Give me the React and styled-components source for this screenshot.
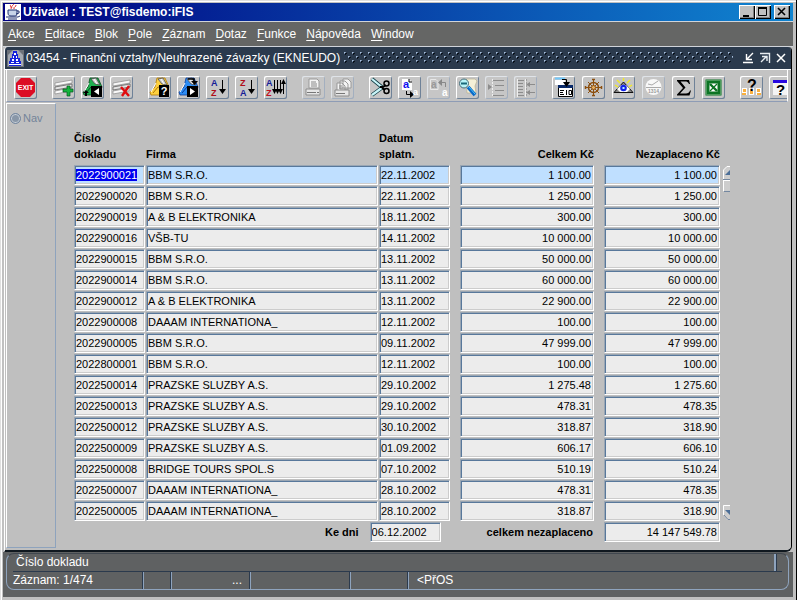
import { useEffect, useRef } from 'react';
import styled, { createGlobalStyle } from 'styled-components';

const GlobalStyle = createGlobalStyle`
    * { box-sizing: border-box; }
    body {
        margin: 0;
        background: #c0c0c0;
        color: #000;
        font-family: "Liberation Sans", Arial, sans-serif;
        font-size: 11px;
    }
    button, input {
        font: inherit;
        color: inherit;
    }
`;

const Window = styled.div`
    display: flex;
    flex-direction: column;
    min-height: 100vh;
    padding: 3px 3px 3px 3px;
    border-right: 1px solid #000;
    border-bottom: 1px solid #000;
    background: #c0c0c0;
    box-shadow: inset 1px 1px 0 #dfdfdf, inset 2px 2px 0 #fff;
`;

const TitleBar = styled.header`
    display: flex;
    align-items: center;
    gap: 2px;
    height: 18px;
    padding: 0 3px 0 2px;
    background: linear-gradient(90deg, #000080, #0842a8 50%, #1084d0);
    color: #fff;
    font-weight: bold;
`;

const TitleText = styled.h1`
    flex: 1;
    margin: 0;
    font-size: 12px;
    line-height: 18px;
`;

const WinButton = styled.button`
    display: flex;
    width: 16px;
    height: 14px;
    padding: 0;
    margin-left: ${props => props.$apart ? '1px' : '-2px'};
    border: 0;
    background: #c0c0c0;
    box-shadow: inset 1px 1px 0 #fff, inset -1px -1px 0 #000, inset -2px -2px 0 #808080;
`;

const MenuBar = styled.nav`
    display: flex;
    gap: 10px;
    height: 26px;
    padding: 0 5px;
    border-top: 1px solid #d0d4da;
    border-bottom: 1px solid #d0d4da;
    background: #656665;
`;

const MenuItem = styled.button`
    padding: 0;
    border: 0;
    background: none;
    color: #fff;
    font-size: 12px;
    line-height: 24px;
    u {
        text-underline-offset: 2px;
    }
`;

const Frame = styled.main`
    display: flex;
    flex: 1;
    flex-direction: column;
    margin: 0 1px 0 1px;
    border-left: 1px solid #fff;
    border-right: 1px solid #000;
    border-bottom: 2px solid #10181f;
    border-radius: 4px 4px 6px 0;
    overflow: hidden;
`;

const FrameTitle = styled.div`
    display: flex;
    align-items: center;
    height: 23px;
    padding: 0 4px 0 2px;
    border-bottom: 1px solid #fff;
    background: #2b3a4d;
    color: #fff;
`;

const FrameName = styled.h2`
    margin: 0 4px 0 2px;
    font-size: 12px;
    font-weight: normal;
    white-space: nowrap;
`;

const BumpsSvg = styled.svg`
    flex: 1;
    min-width: 0;
    height: 12px;
    margin-right: 6px;
`;

const FrameButton = styled.button`
    display: flex;
    width: 12px;
    height: 12px;
    padding: 0;
    margin-left: 4px;
    border: 0;
    background: none;
`;

const ToolBar = styled.div`
    display: flex;
    gap: 15px;
    height: 32px;
    margin: 0 3px 0 1px;
    padding: 6px 0 0 7px;
    border-left: 1px solid #fff;
    border-right: 1px solid #fff;
    border-bottom: 1px solid #8e9cb5;
    background: #c3c3c3;
    overflow: hidden;
`;

const ToolGroup = styled.div`
    display: flex;
    flex: none;
    gap: ${props => props.$wide ? '7px' : '6px'};
`;

const ToolButton = styled.button`
    display: flex;
    flex: none;
    width: 23px;
    height: 23px;
    padding: 0;
    border: 0;
    border-radius: 2px;
    background: #c6c6c6;
    box-shadow: inset 1px 1px 0 #fff, inset -1px -1px 0 #6f8298;
    &:disabled {
        box-shadow: inset 1px 1px 0 #dfe3e8, inset -1px -1px 0 #a3afbf;
    }
`;

const Body = styled.div`
    display: flex;
    flex: 1;
    background: #bfbfbf;
`;

const SidePanel = styled.aside`
    width: 50px;
    margin: 1px 0 2px 1px;
    padding: 7px 3px;
    border: 1px solid #8ea3bd;
    border-top-color: #fff;
    border-left-color: #fff;
`;

const NavLabel = styled.label`
    display: flex;
    align-items: center;
    gap: 2px;
    color: #73849a;
    line-height: 14px;
`;

const NavRadio = styled.input`
    appearance: none;
    flex: none;
    width: 11px;
    height: 11px;
    margin: 0;
    border: 1px solid #7387a0;
    border-radius: 50%;
    background: #8997a8;
    box-shadow: inset 0 0 0 1px #c9d0d8;
`;

const Form = styled.form`
    flex: 1;
    min-width: 0;
    padding: 28px 61px 8px 18px;
`;

const Records = styled.div`
    display: flex;
    gap: 2px;
`;

const Table = styled.table`
    flex: 1;
    width: 100%;
    border-collapse: collapse;
    table-layout: fixed;
`;

const Col = styled.col`
    width: ${props => props.$width};
`;

const Th = styled.th`
    height: 35px;
    padding: 0 ${props => props.$gap || 1}px 3px 0;
    text-align: ${props => props.$right ? 'right' : 'left'};
    vertical-align: bottom;
    line-height: 16px;
`;

const Td = styled.td`
    height: 21px;
    padding: 0 ${props => props.$gap || 1}px 1px 0;
`;

const Field = styled.input`
    display: block;
    width: ${props => props.$width || '100%'};
    height: 20px;
    padding: 0 2px 0 1px;
    border: 1px solid #9aa6b3;
    border-right-color: #fff;
    border-bottom-color: #fff;
    border-radius: 0;
    outline: 0;
    background: ${props => props.$current ? '#bfdfff' : '#ececec'};
    box-shadow: inset 1px 1px 0 #58789b, inset -1px -1px 0 #ccc;
    text-align: ${props => props.$right ? 'right' : 'left'};
    text-overflow: clip;
    &::selection {
        background: #0000f0;
        color: #fff;
    }
`;

const Rail = styled.div`
    display: flex;
    flex-direction: column;
    justify-content: space-between;
    width: 7px;
    padding: 36px 0 2px;
`;

const RailButton = styled.button`
    display: flex;
    width: 7px;
    height: ${props => props.$tall ? '26px' : '15px'};
    padding: 0;
    border: 0;
    background: none;
`;

const Totals = styled.div`
    display: flex;
    align-items: center;
    justify-content: flex-end;
    gap: 11px;
    padding-right: 10px;
`;

const TotalLabel = styled.label`
    font-weight: bold;
    &:not(:first-child) {
        padding-left: 35px;
    }
`;

const StatusBar = styled.footer`
    padding: 1px 4px 7px 3px;
    background: #5f6162;
    color: #fff;
    font-size: 12px;
`;

const StatusBox = styled.div`
    padding: 0 6px;
    border: 1px solid #8ea3bd;
    border-top-color: #40474f;
    border-radius: 8px;
`;

const StatusLine = styled.div`
    display: grid;
    grid-template-columns: ${props => props.$columns};
    line-height: 17px;
`;

const StatusHint = styled(StatusLine)`
    border-bottom: 1px solid #2b3a4d;
`;

const StatusCell = styled.span`
    height: 17px;
    padding: 0 8px;
    border-right: 1px solid #8ea3bd;
    box-shadow: inset -1px 0 0 #2b3a4d;
    text-align: ${props => props.$right ? 'right' : 'left'};
    &:first-child {
        padding-left: ${props => props.$inset ? '3px' : '0'};
    }
    &:last-child {
        border-right: ${props => props.$inset ? '1px solid #2b3a4d' : '0'};
        box-shadow: ${props => props.$inset ? 'inset -2px 0 0 #8ea3bd' : 'none'};
    }
`;

const Glyph = ({ size = 23, height, children }) => (
    <svg width={size} height={height || size} viewBox={`0 0 ${size} ${height || size}`} fill="none" aria-hidden="true">
        {children}
    </svg>
);

const letter = { fontFamily: '"Liberation Sans", Arial, sans-serif', fontWeight: 'bold' };

const JavaIcon = () => (
    <Glyph size={16}>
        <path d="M0 0h16v16H0z" fill="#fff" />
        <path d="M8 0c2 1-3 2-1 4M11 1c1 1-3 2-2 4M6 1c-2 1 1 2 0 4" stroke="#e02020" />
        <path d="M3 6h9v4c0 2-2 2-3 2H6c-2 0-3-1-3-3z" fill="#c8d4e8" stroke="#203070" />
        <path d="M12 7h2v2l-3 1M1 13h12l2-1M3 15h9" stroke="#203070" />
    </Glyph>
);

const FormIcon = () => (
    <Glyph size={17}>
        <path d="M0 0h17v17H0z" fill="#6c7178" />
        <path d="M1 16V5l5-5h5l5 5v11z" fill="#a4a9b0" />
        <path d="M6 1h4v3h1v4h2v3h1v5H2v-5h1V8h2V4h1z" fill="#1522dc" />
        <path d="M7 3h2v2H7zM6 6h1v2H6zM9 6h1v2H9zM5 9h2v2H5zM9 9h2v2H9zM4 12h3v1H4zM9 12h3v1H9zM2 14h12v1H2z" fill="#fff" />
    </Glyph>
);

const Bumps = () => (
    <BumpsSvg aria-hidden="true" shapeRendering="crispEdges">
        <defs>
            <pattern id="bumps" width="8" height="8" patternUnits="userSpaceOnUse">
                <path d="M0 0h1v1H0zM4 4h1v1H4z" fill="#a9bdd8" />
                <path d="M1 0h1v1H1zM0 1h1v1H0zM5 4h1v1H5zM4 5h1v1H4z" fill="#7c93b0" />
                <path d="M1 1h2v1H1zM1 2h1v1H1zM5 5h2v1H5zM5 6h1v1H5z" fill="#0a111b" />
            </pattern>
        </defs>
        <rect width="100%" height="12" fill="url(#bumps)" />
    </BumpsSvg>
);

const Sheet = () => (
    <>
        <path d="M3 7l17-3v3L3 10z" fill="#f8f8f8" stroke="#8a8a8a" strokeWidth="0.7" />
        <path d="M3 11l17-3v3L3 14z" fill="#e4e4e4" stroke="#555" strokeWidth="0.7" />
        <path d="M3 15l16-3v3L3 18z" fill="#fafafa" stroke="#888" strokeWidth="0.7" />
    </>
);

const Folder = ({ color, dark }) => (
    <>
        <path d="M9 2h8l4 9-4 8H3l-1-3 5-5z" fill={color} stroke={dark} strokeWidth="0.8" />
        <path d="M10 3l5-1 4 7-5-1z" fill="#cfcfcf" stroke="#444" strokeWidth="0.7" />
        <path d="M13 3l3 5M8 7l-5 9" stroke="#fff" />
        <path d="M5 17l5-6 7 1" stroke={dark} />
    </>
);

const Exit = () => (
    <Glyph>
        <path d="M7 2h9l5 5v9l-5 5H7l-5-5V7z" fill="#dc0c24" />
        <text x="11.500" y="14" fill="#fff" textAnchor="middle" fontSize="7" {...letter}>EXIT</text>
    </Glyph>
);

const Insert = () => (
    <Glyph>
        <Sheet />
        <path d="M15 10h3v3h3v3h-3v4h-3v-4h-4v-3h4z" fill="#14b43c" stroke="#04581c" strokeWidth="0.7" />
    </Glyph>
);

const Duplicate = () => (
    <Glyph>
        <Folder color="#1fb050" dark="#064c1c" />
        <path d="M10 10h11v11H10z" fill="#000" />
        <path d="M18 12v7l-5-3.500z" fill="#fff" />
        <path d="M2 17l3-3 3 3H6v3H4v-3z" fill="#000" />
    </Glyph>
);

const Remove = () => (
    <Glyph>
        <Sheet />
        <path d="M11 11l8 9M19 10l-7 10" stroke="#e00c10" strokeWidth="2.400" />
    </Glyph>
);

const EnterQuery = () => (
    <Glyph>
        <Folder color="#fcd040" dark="#b07808" />
        <path d="M11 9h10v12H11z" fill="#000" />
        <text x="16" y="19" fill="#fff" textAnchor="middle" fontSize="11" {...letter}>?</text>
    </Glyph>
);

const RunQuery = () => (
    <Glyph>
        <Folder color="#2c8cf4" dark="#0c3c98" />
        <path d="M10 10h11v11H10z" fill="#000" />
        <path d="M13 12v7l5-3.500z" fill="#fff" />
        <path d="M11 3h6v3" stroke="#000" strokeWidth="1.500" />
        <path d="M14 5h7l-3.500 4z" fill="#000" />
    </Glyph>
);

const Sort = ({ top, bottom, topColor, bottomColor }) => (
    <Glyph>
        <text x="5" y="10" fill={topColor} fontSize="9" {...letter}>{top}</text>
        <text x="5" y="20" fill={bottomColor} fontSize="9" {...letter}>{bottom}</text>
        <path d="M16.500 4v13" stroke="#000" />
        <path d="M13 13h7l-3.500 5z" fill="#000" />
    </Glyph>
);

const SortMany = () => (
    <Glyph>
        <text x="2" y="10" fill="#141c98" fontSize="9" {...letter}>A</text>
        <text x="2" y="20" fill="#c01020" fontSize="9" {...letter}>Z</text>
        <path d="M10.500 4v12M13.500 4v12M16.500 4v12M19.500 6v12" stroke="#000" />
        <path d="M8 13h5l-2.500 5zM11 13h5l-2.500 5zM14 13h5l-2.500 5zM17 8h5l-2.500-5z" fill="#000" />
    </Glyph>
);

const Print = () => (
    <Glyph>
        <path d="M7 3h8l2 2v7H7z" fill="#f4f4f4" stroke="#999" />
        <path d="M9 6h5M9 8h6M9 10h6" stroke="#888" />
        <path d="M4 13h14v6H4z" fill="#e6e6e6" stroke="#8c8c8c" />
        <path d="M5 16.500h9M15 16.500h2" stroke="#777" />
    </Glyph>
);

const PrintMany = () => (
    <Glyph>
        <path d="M12 3h5l3 3v6h-8zM9 5h5l3 3v5H9zM6 7h5l3 3v5H6z" fill="#f4f4f4" stroke="#999" />
        <path d="M8 10h3M8 12h4" stroke="#888" />
        <path d="M4 14h14v6H4z" fill="#e6e6e6" stroke="#8c8c8c" />
        <path d="M5 17.500h9" stroke="#777" />
    </Glyph>
);

const Cut = () => (
    <Glyph>
        <path d="M3 3l11 9M3 19l11-8" stroke="#103c44" strokeWidth="3.600" />
        <path d="M3 3l11 9M3 19l11-8" stroke="#c8f4f8" strokeWidth="2.200" />
        <circle cx="17.500" cy="7.500" r="2.500" stroke="#000" strokeWidth="1.500" />
        <circle cx="17.500" cy="15" r="2.500" stroke="#000" strokeWidth="1.500" />
        <path d="M11 11h3l3-2M13 12l3 2" stroke="#000" strokeWidth="2" />
    </Glyph>
);

const Copy = () => (
    <Glyph>
        <path d="M4 3h7l3 3v8H4z" fill="#fff" />
        <path d="M11 3v3h3" stroke="#000" />
        <text x="5" y="12" fill="#1010f0" fontSize="11" {...letter}>a</text>
        <path d="M8.500 15v3.500H13" stroke="#000" />
        <path d="M12 15v7l4-3.500z" fill="#000" />
        <text x="15" y="19" fill="#fff" fontSize="9" {...letter}>a</text>
    </Glyph>
);

const Paste = () => (
    <Glyph>
        <path d="M3.500 3.500H9l2 2v8H3.500z" stroke="#e8e8e8" />
        <text x="4" y="12" fill="#999" fontSize="10" {...letter}>a</text>
        <path d="M13 6.500h5.500V11" stroke="#888" />
        <path d="M15 3v7l-4-3.500z" fill="#888" />
        <text x="15" y="20" fill="#fff" fontSize="10" {...letter}>a</text>
    </Glyph>
);

const Find = () => (
    <Glyph>
        <path d="M10 3h9l2 2-2 5 1 7h-9z" fill="#f4f0d8" stroke="#b8b090" strokeWidth="0.700" />
        <path d="M12 11l7 8" stroke="#0868c8" strokeWidth="3.500" />
        <path d="M13 11l6 7" stroke="#50c8fc" />
        <circle cx="8" cy="7.500" r="4.500" fill="#b8f4f8" stroke="#486c78" />
        <path d="M5 7.500h6" stroke="#186878" strokeWidth="2" />
    </Glyph>
);

const Indent = () => (
    <Glyph>
        <path d="M8 4.500h11M10 9.500h9M10 14.500h9M8 19.500h11" stroke="#8c8c8c" />
        <path d="M7.500 3v17" stroke="#eee" strokeDasharray="2 1" />
        <path d="M3 8v6l4-3z" fill="#8c8c8c" />
    </Glyph>
);

const IndentTwin = () => (
    <Glyph>
        <path d="M4 4.500h6M4 7.500h5M4 10.500h5M4 13.500h5M4 16.500h5M4 19.500h6M14 8.500h7M14 16.500h7" stroke="#8c8c8c" />
        <path d="M3.500 3v18M11.500 3v18" stroke="#eee" />
        <path d="M12.500 3v18" stroke="#a0a0a0" strokeDasharray="2 1" />
        <path d="M16 6v5l-4-2.500zM16 14v5l-4-2.500z" fill="#8c8c8c" />
    </Glyph>
);

const ListValues = () => (
    <Glyph>
        <path d="M3 4h10v5H3z" fill="#fff" />
        <path d="M3 2.500h10" stroke="#70c8fc" strokeWidth="2" />
        <path d="M6.500 9.500h14v11h-14z" fill="#fff" stroke="#000" />
        <path d="M6 9h15v3H6z" fill="#082868" />
        <path d="M8 14.500h4M8 16.500h3M8 18.500h4M14.500 14v5M17 14.500h2.500v4H17z" stroke="#000" />
        <path d="M10 3.500h4.500V7" stroke="#000" />
        <path d="M11 6h7l-3.500 5z" fill="#000" />
    </Glyph>
);

const Wheel = () => (
    <Glyph>
        <circle cx="11.500" cy="11.500" r="5" stroke="#8c5010" strokeWidth="1.500" />
        <path d="M3 11.500h17M11.500 3v17M6 6l11 11M17 6L6 17" stroke="#8c5010" />
        <path d="M3.500 10v3M19.500 10v3M10 3.500h3M10 19.500h3" stroke="#8c5010" strokeWidth="1.500" />
        <circle cx="11.500" cy="11.500" r="2" fill="#e8b060" stroke="#8c5010" />
    </Glyph>
);

const Eye = () => (
    <Glyph>
        <path d="M3 9l3 2M5 4l3 3M11.500 2v3M18 4l-3 3M20 9l-3 2" stroke="#f4ec20" strokeWidth="1.400" />
        <path d="M11.500 6L21 16.500H2z" fill="#8a8a8a" stroke="#101010" />
        <path d="M5 13l4-4h5l4 4-3 3H8z" fill="#fff" />
        <circle cx="11.500" cy="12" r="3.300" fill="#1424e8" />
        <path d="M10.500 11h2v2h-2z" fill="#b0f0ff" />
    </Glyph>
);

const Clock = () => (
    <Glyph>
        <circle cx="11.500" cy="11" r="8" fill="#f8f8f8" />
        <path d="M10 9l6-4M10 9L6 8M4 11.500h15" stroke="#aaa" />
        <text x="11.500" y="17" fill="#999" textAnchor="middle" fontSize="5" {...letter}>1314</text>
    </Glyph>
);

const Sigma = () => (
    <Glyph>
        <path d="M5 4h12l1 4h-1c-1-2-2-2.500-4-2.500H8.500l5 6-5.500 6h6c2 0 3.500-1 4-3h1l-1.500 5H5v-1l6-6.500L5 5z" fill="#000" />
    </Glyph>
);

const Excel = () => (
    <Glyph>
        <path d="M5.500 5.500h12v12h-12z" fill="#fff" stroke="#0c7424" strokeWidth="4" />
        <path d="M4.500 4.500h14v14h-14z" stroke="#8cc094" strokeDasharray="1 1" />
        <path d="M8 8l7 7" stroke="#0c7424" strokeWidth="2.400" />
        <path d="M15 8l-7 7" stroke="#0c7424" strokeWidth="1.200" />
    </Glyph>
);

const HelpItems = () => (
    <Glyph>
        <path d="M2 12h5v7H2zM9 12h5v7H9zM16 12h5v7h-5z" fill="#fff" />
        <path d="M3 13h3v3H3zM10 15h3v3h-3zM17 13h3v3h-3zM2 17h4v2H2zM17 17h4v2h-4z" fill="#f8b040" />
        <text x="12" y="15" fill="#000" textAnchor="middle" fontSize="16" {...letter}>?</text>
    </Glyph>
);

const HelpWindow = () => (
    <Glyph>
        <path d="M4 4h17v15H4z" fill="#f4f4f4" />
        <path d="M4 4h17v3H4z" fill="#2808e0" />
        <text x="11.500" y="19" fill="#000" textAnchor="middle" fontSize="15" {...letter}>?</text>
    </Glyph>
);

const menu = ['Akce', 'Editace', 'Blok', 'Pole', 'Záznam', 'Dotaz', 'Funkce', 'Nápověda', 'Window'];

const tools = [
    [['Konec', <Exit />]],
    [['Vložit záznam', <Insert />], ['Duplikovat', <Duplicate />], ['Zrušit záznam', <Remove />]],
    [
        ['Zadat dotaz', <EnterQuery />],
        ['Provést dotaz', <RunQuery />],
        ['Třídit vzestupně', <Sort top="A" bottom="Z" topColor="#141c98" bottomColor="#b00c18" />],
        ['Třídit sestupně', <Sort top="Z" bottom="A" topColor="#b00c18" bottomColor="#141c98" />],
        ['Třídění', <SortMany />],
    ],
    [['Tisk', <Print />, true], ['Tisk sestav', <PrintMany />, true]],
    [
        ['Vyjmout', <Cut />],
        ['Kopírovat', <Copy />],
        ['Vložit', <Paste />, true],
        ['Najít', <Find />],
        ['Blok', <Indent />, true],
        ['Bloky', <IndentTwin />, true],
    ],
    [
        ['Seznam hodnot', <ListValues />],
        ['Navigace', <Wheel />],
        ['Náhled', <Eye />],
        ['Čas', <Clock />, true],
        ['Součet', <Sigma />],
        ['Excel', <Excel />],
    ],
    [['Nápověda k položce', <HelpItems />], ['Nápověda k oknu', <HelpWindow />]],
];

const columns = [
    { name: 'Číslo dokladu', head: <>Číslo<br />dokladu</>, width: '72px' },
    { name: 'Firma', head: 'Firma', width: 'auto' },
    { name: 'Datum splatn.', head: <>Datum<br />splatn.</>, width: '81px', gap: 10 },
    { name: 'Celkem Kč', head: 'Celkem Kč', width: '144px', gap: 10, right: true },
    { name: 'Nezaplaceno Kč', head: 'Nezaplaceno Kč', width: '117px', right: true },
];

const rows = [
    ['2022900021', 'BBM S.R.O.', '22.11.2002', '1 100.00', '1 100.00'],
    ['2022900020', 'BBM S.R.O.', '22.11.2002', '1 250.00', '1 250.00'],
    ['2022900019', 'A & B ELEKTRONIKA', '18.11.2002', '300.00', '300.00'],
    ['2022900016', 'VŠB-TU', '14.11.2002', '10 000.00', '10 000.00'],
    ['2022900015', 'BBM S.R.O.', '13.11.2002', '50 000.00', '50 000.00'],
    ['2022900014', 'BBM S.R.O.', '13.11.2002', '60 000.00', '60 000.00'],
    ['2022900012', 'A & B ELEKTRONIKA', '13.11.2002', '22 900.00', '22 900.00'],
    ['2022900008', 'DAAAM INTERNATIONA_', '12.11.2002', '100.00', '100.00'],
    ['2022900005', 'BBM S.R.O.', '09.11.2002', '47 999.00', '47 999.00'],
    ['2022800001', 'BBM S.R.O.', '12.11.2002', '100.00', '100.00'],
    ['2022500014', 'PRAZSKE SLUZBY A.S.', '29.10.2002', '1 275.48', '1 275.60'],
    ['2022500013', 'PRAZSKE SLUZBY A.S.', '29.10.2002', '478.31', '478.35'],
    ['2022500012', 'PRAZSKE SLUZBY A.S.', '30.10.2002', '318.87', '318.90'],
    ['2022500009', 'PRAZSKE SLUZBY A.S.', '01.09.2002', '606.17', '606.10'],
    ['2022500008', 'BRIDGE TOURS SPOL.S', '07.10.2002', '510.19', '510.24'],
    ['2022500007', 'DAAAM INTERNATIONA_', '28.10.2002', '478.31', '478.35'],
    ['2022500005', 'DAAAM INTERNATIONA_', '28.10.2002', '318.87', '318.90'],
];

export default function App() {
    const first = useRef(null);

    useEffect(() => {
        first.current.focus();
        first.current.select();
    }, []);

    return (
        <Window>
            <GlobalStyle />
            <TitleBar>
                <JavaIcon />
                <TitleText>Uživatel : TEST@fisdemo:iFIS</TitleText>
                <WinButton aria-label="Minimalizovat">
                    <Glyph size={16} height={14}><path d="M4 10h6v2H4z" fill="#000" /></Glyph>
                </WinButton>
                <WinButton aria-label="Maximalizovat">
                    <Glyph size={16} height={14}><path d="M3.500 3.500h8v7h-8zM3 3.500h9" stroke="#000" /><path d="M3 2h9v2H3z" fill="#000" /></Glyph>
                </WinButton>
                <WinButton $apart aria-label="Zavřít">
                    <Glyph size={16} height={14}><path d="M4 3l7 7M11 3l-7 7" stroke="#000" strokeWidth="1.600" /></Glyph>
                </WinButton>
            </TitleBar>
            <MenuBar>
                {menu.map(item => <MenuItem key={item}><u>{item[0]}</u>{item.slice(1)}</MenuItem>)}
            </MenuBar>
            <Frame>
                <FrameTitle>
                    <FormIcon />
                    <FrameName>03454 - Finanční vztahy/Neuhrazené závazky (EKNEUDO)</FrameName>
                    <Bumps />
                    <FrameButton aria-label="Zmenšit">
                        <Glyph size={12}><path d="M10 1L4 7M3.500 2v5.500H9M0 10.500h10" stroke="#fff" strokeWidth="1.400" /></Glyph>
                    </FrameButton>
                    <FrameButton aria-label="Zvětšit">
                        <Glyph size={12}><path d="M1 1.500h9.500V11M2 10l6-6M3 4.500h5V9" stroke="#e8ecf0" strokeWidth="1.400" /></Glyph>
                    </FrameButton>
                    <FrameButton aria-label="Zavřít formulář">
                        <Glyph size={12}><path d="M2 2l8 8M10 2l-8 8" stroke="#fff" strokeWidth="1.500" /></Glyph>
                    </FrameButton>
                </FrameTitle>
                <ToolBar>
                    {tools.map((group, i) => (
                        <ToolGroup key={i} $wide={i === 5}>
                            {group.map(([name, icon, disabled]) => (
                                <ToolButton key={name} aria-label={name} disabled={disabled}>{icon}</ToolButton>
                            ))}
                        </ToolGroup>
                    ))}
                </ToolBar>
                <Body>
                    <SidePanel>
                        <NavLabel><NavRadio type="radio" name="nav" disabled />Nav</NavLabel>
                    </SidePanel>
                    <Form>
                        <Records>
                            <Table>
                                <colgroup>
                                    {columns.map(col => <Col key={col.name} $width={col.width} />)}
                                </colgroup>
                                <thead>
                                    <tr>
                                        {columns.map(col => <Th key={col.name} $gap={col.gap} $right={col.right}>{col.head}</Th>)}
                                    </tr>
                                </thead>
                                <tbody>
                                    {rows.map((row, r) => (
                                        <tr key={row[0]}>
                                            {row.map((value, c) => (
                                                <Td key={c} $gap={columns[c].gap}>
                                                    <Field
                                                        ref={r === 0 && c === 0 ? first : null}
                                                        aria-label={columns[c].name + ' ' + (r + 1)}
                                                        defaultValue={value}
                                                        $current={r === 0}
                                                        $right={columns[c].right}
                                                    />
                                                </Td>
                                            ))}
                                        </tr>
                                    ))}
                                </tbody>
                            </Table>
                            <Rail>
                                <RailButton type="button" $tall aria-label="Předchozí záznam">
                                    <Glyph size={7} height={26}>
                                        <path d="M7 0H4L0 4v22h7z" fill="#cdcdcd" />
                                        <path d="M7 .5H4L.5 4v9M.5 15v10M0 14.500h7" stroke="#fff" />
                                        <path d="M0 13.500h7M1 25.500h6" stroke="#7387a0" />
                                        <path d="M7 4v5H2z" fill="#4c6f98" />
                                    </Glyph>
                                </RailButton>
                                <RailButton type="button" aria-label="Další záznam">
                                    <Glyph size={7} height={15}>
                                        <path d="M0 0h7v15H4l-4-5z" fill="#cdcdcd" />
                                        <path d="M7 .5H.5V10" stroke="#fff" />
                                        <path d="M1 10l4 4.500h2" stroke="#7387a0" />
                                        <path d="M2 5h5v5z" fill="#4c6f98" />
                                    </Glyph>
                                </RailButton>
                            </Rail>
                        </Records>
                        <Totals>
                            <TotalLabel htmlFor="due">Ke dni</TotalLabel>
                            <Field id="due" $width="71px" defaultValue="06.12.2002" />
                            <TotalLabel htmlFor="total">celkem nezaplaceno</TotalLabel>
                            <Field id="total" $width="116px" $right defaultValue="14 147 549.78" />
                        </Totals>
                    </Form>
                </Body>
            </Frame>
            <StatusBar>
                <StatusBox>
                    <StatusHint $columns="1fr 5px">
                        <StatusCell $inset>Číslo dokladu</StatusCell>
                    </StatusHint>
                    <StatusLine $columns="131px 28px 79px 100px 58px 1fr">
                        <StatusCell>Záznam: 1/474</StatusCell>
                        <StatusCell />
                        <StatusCell $right>...</StatusCell>
                        <StatusCell />
                        <StatusCell />
                        <StatusCell>&lt;PřOS</StatusCell>
                    </StatusLine>
                </StatusBox>
            </StatusBar>
        </Window>
    );
}
